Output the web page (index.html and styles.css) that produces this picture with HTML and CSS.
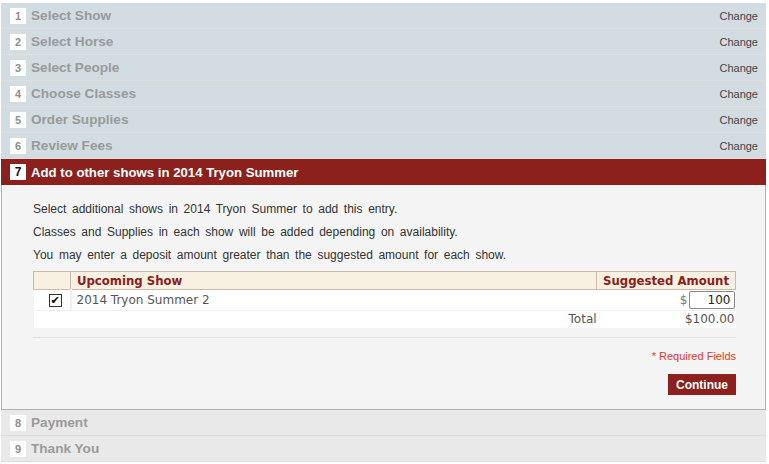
FILE: index.html
```html
<!DOCTYPE html>
<html>
<head>
<meta charset="utf-8">
<link rel="stylesheet" href="styles.css">
</head>
<body>
<div class="wizard">
  <div class="step done"><span class="num">1</span><span class="title">Select Show</span><a class="change">Change</a></div>
  <div class="step done"><span class="num">2</span><span class="title">Select Horse</span><a class="change">Change</a></div>
  <div class="step done"><span class="num">3</span><span class="title">Select People</span><a class="change">Change</a></div>
  <div class="step done"><span class="num">4</span><span class="title">Choose Classes</span><a class="change">Change</a></div>
  <div class="step done"><span class="num">5</span><span class="title">Order Supplies</span><a class="change">Change</a></div>
  <div class="step done"><span class="num">6</span><span class="title">Review Fees</span><a class="change">Change</a></div>
  <div class="step active"><span class="num">7</span><span class="title">Add to other shows in 2014 Tryon Summer</span></div>
  <div class="panel">
    <p class="intro">Select additional shows in 2014 Tryon Summer to add this entry.</p>
    <p class="intro">Classes and Supplies in each show will be added depending on availability.</p>
    <p class="intro">You may enter a deposit amount greater than the suggested amount for each show.</p>
    <table class="shows">
      <thead>
        <tr><th class="c-check"></th><th class="c-name">Upcoming Show</th><th class="c-amt">Suggested Amount</th></tr>
      </thead>
      <tbody>
        <tr class="item">
          <td class="c-check"><span class="checkbox">&#10004;</span></td>
          <td class="c-name">2014 Tryon Summer 2</td>
          <td class="c-amt"><span class="dollar">$</span><span class="amt-input">100</span></td>
        </tr>
        <tr class="total">
          <td></td>
          <td class="total-label">Total</td>
          <td class="c-amt">$100.00</td>
        </tr>
      </tbody>
    </table>
    <div class="rule"></div>
    <div class="required">* Required Fields</div>
    <div class="actions"><button class="continue">Continue</button></div>
  </div>
  <div class="step future"><span class="num">8</span><span class="title">Payment</span></div>
  <div class="step future"><span class="num">9</span><span class="title">Thank You</span></div>
</div>
</body>
</html>
```
FILE: styles.css
```css
html, body { background: #ffffff; }
body {
  margin: 3px 3px 0 1px;
  font-family: "Liberation Sans", Arial, sans-serif;
}
.wizard { width: 765px; }
.step {
  height: 25px;
  border-bottom: 1px solid #e2dfdc;
  display: flex;
  align-items: center;
  padding: 0 8px 0 9px;
  box-sizing: content-box;
}
.step.done { background: #d3dce1; }
.step.future { background: #e9e9e9; border-bottom: 1px solid #dcdcdc; }
.step.active { background: #8b201d; border-bottom: none; height: 26px; }
.num {
  width: 16px; height: 16px;
  background: #fff;
  color: #8e8e8e;
  font-size: 11px;
  font-weight: bold;
  display: flex; align-items: center; justify-content: center;
  margin-right: 5px;
}
.title {
  font-size: 13.6px;
  font-weight: bold;
  color: #9a9a9a;
  flex: 1;
}
.step.active .num { color: #111; font-size: 12px; }
.step.active .title { color: #fff; font-size: 13.2px; }
.change {
  font-size: 11px;
  color: #444;
}
.panel {
  background: #f4f4f4;
  border: 1px solid #b7afa6;
  border-top: none;
  padding: 17px 30px 14px 31px;
}
.intro {
  margin: 0 0 9px 0;
  font-size: 12px;
  line-height: 14px;
  color: #333;
  word-spacing: 2.3px;
}
.shows {
  width: 703px;
  margin-top: 0;
  border-collapse: collapse;
  font-family: "DejaVu Sans", Verdana, sans-serif;
  font-size: 12px;
}
.shows th {
  background: #f8f0e1;
  border: 1px solid #c9bba9;
  height: 17px;
  padding: 0 6px;
  text-align: left;
  color: #8b201d;
  font-family: "DejaVu Sans Condensed", "DejaVu Sans", sans-serif;
  font-size: 13px;
  font-weight: bold;
  white-space: nowrap;
  line-height: 17px;
}
.shows th.c-check { width: 24px; }
.shows th.c-amt { width: 118px; }
.shows td { background: #fff; color: #555; padding: 0 5px; white-space: nowrap; }
.item td { height: 20px; border-bottom: 1px solid #eeeeee; }
.item td.c-check { border-right: 2px solid #f0f0f0; text-align: right; padding-right: 8px; }
.total td { height: 17px; line-height: 17px; }
.total-label { text-align: right; padding-right: 0 !important; }
.shows td.c-amt { text-align: right; padding-right: 1px; }
.checkbox {
  display: inline-flex;
  width: 11px; height: 11px;
  border: 1px solid #333;
  background: #fff;
  align-items: center; justify-content: center;
  font-size: 11px;
  color: #000;
  line-height: 1;
  vertical-align: middle;
}
.dollar { color: #777; margin-right: 1px; }
.amt-input {
  display: inline-block;
  width: 38px;
  height: 16px;
  line-height: 16px;
  border: 1px solid #888;
  border-radius: 2px;
  padding: 0 3px;
  text-align: right;
  color: #222;
  vertical-align: middle;
  background: #fff;
}
.rule { height: 1px; background: #dfdfdf; margin-top: 9px; width: 703px; }
.required {
  text-align: right;
  font-size: 11px;
  line-height: 13px;
  color: #e23a1e;
  margin-top: 12px;
  width: 703px;
}
.actions { display: flex; justify-content: flex-end; width: 703px; margin-top: 11px; }
.continue {
  background: #8b201d;
  color: #fff;
  border: none;
  font-family: "Liberation Sans", Arial, sans-serif;
  font-size: 12px;
  font-weight: bold;
  height: 21px;
  width: 68px;
  padding: 0;
  display: block;
}
```
